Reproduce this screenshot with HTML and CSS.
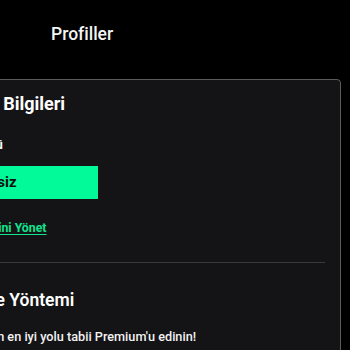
FILE: index.html
```html
<!DOCTYPE html>
<html lang="tr">
<head>
<meta charset="utf-8">
<title>Profiller</title>
<link rel="stylesheet" href="styles.css">
</head>
<body>
<main class="page">
  <h1 class="page-title">Profiller</h1>
  <section class="card">
    <h2 class="card-title">Üyelik Bilgileri</h2>
    <div class="field-label">Plan Türü</div>
    <div class="plan-badge">Ücretsiz</div>
    <a class="manage-link" href="#">Aboneliğini Yönet</a>
    <hr class="divider">
    <h2 class="section-title">Ödeme Yöntemi</h2>
    <p class="promo">İzlemenin en iyi yolu tabii Premium'u edinin!</p>
  </section>
</main>
</body>
</html>
```
FILE: styles.css
```css
html, body {
  margin: 0;
  padding: 0;
  background: #000;
}
body {
  font-family: Roboto, "Liberation Sans", sans-serif;
  color: #fff;
  overflow: hidden;
  height: 350px;
}
.page {
  padding: 23px 9px 0 0;
}
.page-title {
  margin: 0 0 0 51px;
  font-size: 17.5px;
  font-weight: 500;
  line-height: 22px;
  color: #f4f4f4;
}
.card {
  margin: 34px 0 0 -76px;
  padding: 13px 15px 40px 24px;
  background: #141416;
  border: 1px solid #5b5b5e;
  border-radius: 4px;
  white-space: nowrap;
}
.card-title {
  margin: 0;
  font-size: 18px;
  font-weight: 700;
  line-height: 22px;
}
.field-label {
  margin-top: 22px;
  font-size: 12.5px;
  font-weight: 700;
  line-height: 16px;
}
.plan-badge {
  margin-top: 13px;
  width: 149px;
  height: 33px;
  box-sizing: border-box;
  padding-left: 12px;
  background: #03fa98;
  color: #111;
  font-size: 15px;
  font-weight: 700;
  line-height: 33px;
}
.manage-link {
  display: inline-block;
  margin-top: 21px;
  font-size: 12.3px;
  font-weight: 700;
  line-height: 16px;
  color: #11e48e;
  text-decoration: underline;
  text-underline-offset: 2px;
}
.divider {
  margin: 26px 0 0;
  border: 0;
  height: 1px;
  background: #3a3a3d;
}
.section-title {
  margin: 26px 0 0;
  font-size: 17.5px;
  font-weight: 600;
  line-height: 22px;
}
.promo {
  margin: 17px 0 0;
  font-size: 12.7px;
  font-weight: 500;
  line-height: 17px;
  color: #f2f2f2;
}
```
